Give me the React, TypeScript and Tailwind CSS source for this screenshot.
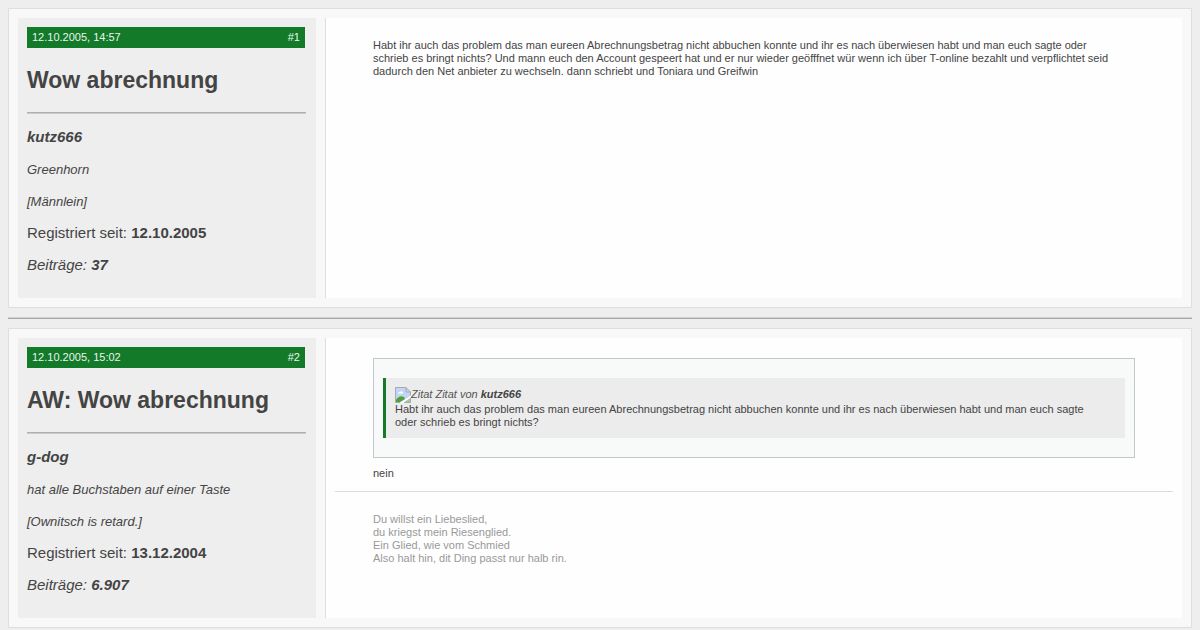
import type { ReactNode } from "react";

type PostProps = {
  date: string;
  number: string;
  title: string;
  author: string;
  rank: string;
  note: string;
  joined: string;
  posts: string;
  children: ReactNode;
};

function BrokenImage() {
  return (
    <svg role="img" aria-label="Zitat" width="16" height="16" viewBox="0 0 16 16" className="shrink-0">
      <path d="M.5 .5H11L15.5 5V9L5 15.5H.5Z" fill="#c3d5f5" />
      <path d="M1 15V13C3 9.5 6 8.5 9 10L10 12L5 15Z" fill="#4da338" />
      <path d="M3 6.5C3 5 4.5 4.5 5.2 5.2C6 3.6 8.2 4.3 8 6.5Z" fill="#fff" />
      <path d="M5 15.5H.5V.5H11L15.5 5V8.5M11 .5V5H15.5" fill="none" stroke="#a5abb0" />
      <path d="M15.5 11V15.5H9L15.5 11Z" fill="#9fc994" stroke="#a5abb0" />
      <path d="M16 8.5L5 16H8L16 10.5Z" fill="#fff" />
    </svg>
  );
}

function Post({ date, number, title, author, rank, note, joined, posts, children }: PostProps) {
  return (
    <article className="flex gap-[9px] border border-[#dedede] bg-[#f8f8f8] p-[9px]">
      <aside className="w-[298px] shrink-0 bg-[#eeeeee] px-[9px] pt-[9px] pb-6">
        <header className="mr-0.5 flex justify-between bg-[#137a2a] px-[5px] py-1 text-[11px] leading-[13px] text-[#e9f5eb]">
          <time>{date}</time>
          <span>{number}</span>
        </header>
        <h2 className="mt-[18px] text-[23px] leading-7 font-bold">{title}</h2>
        <hr className="mt-[18px] mr-px mb-3.5 border-t border-b border-t-[#b0b0b0] border-b-[#cacaca]" />
        <div className="flex flex-col gap-3.5 text-[15px] leading-[18px]">
          <p className="font-bold italic">{author}</p>
          <p className="-mb-0.5 text-[13px] leading-5 italic">{rank}</p>
          <p className="-mb-0.5 text-[13px] leading-5 italic">{note}</p>
          <p>
            Registriert seit: <strong>{joined}</strong>
          </p>
          <p className="italic">
            Beiträge: <strong>{posts}</strong>
          </p>
        </div>
      </aside>
      <section className="min-w-0 flex-1 border-l border-[#dedede] bg-[#fefefe] text-[11px] leading-[13px]">
        {children}
      </section>
    </article>
  );
}

export default function App() {
  return (
    <main className="bg-[#eeeeee] p-2 font-['Liberation_Sans',Arial,sans-serif] text-[#444444]">
      <Post
        date="12.10.2005, 14:57"
        number="#1"
        title="Wow abrechnung"
        author="kutz666"
        rank="Greenhorn"
        note="[Männlein]"
        joined="12.10.2005"
        posts="37"
      >
        <p className="pt-[21px] pr-16 pl-[47px]">
          Habt ihr auch das problem das man eureen Abrechnungsbetrag nicht abbuchen konnte und ihr es nach überwiesen
          habt und man euch sagte oder schrieb es bringt nichts? Und mann euch den Account gespeert hat und er nur
          wieder geöfffnet wür wenn ich über T-online bezahlt und verpflichtet seid dadurch den Net anbieter zu
          wechseln. dann schriebt und Toniara und Greifwin
        </p>
      </Post>
      <hr className="my-[9px] border-t border-b border-t-[#d2d2d2] border-b-[#a8a8a8]" />
      <Post
        date="12.10.2005, 15:02"
        number="#2"
        title="AW: Wow abrechnung"
        author="g-dog"
        rank="hat alle Buchstaben auf einer Taste"
        note="[Ownitsch is retard.]"
        joined="13.12.2004"
        posts="6.907"
      >
        <div className="px-[47px] pt-5">
          <div className="border border-[#c0c8cb] bg-[#f8f9f9] px-[9px] py-[19px]">
            <blockquote className="border-l-[3px] border-[#137a2a] bg-[#ececec] py-[9px] pr-6 pl-[9px]">
              <div className="flex h-4 items-start leading-[14px] text-[#555555] italic">
                <BrokenImage />
                <span>
                  Zitat Zitat von <strong className="text-[#444444]">kutz666</strong>
                </span>
              </div>
              <p>
                Habt ihr auch das problem das man eureen Abrechnungsbetrag nicht abbuchen konnte und ihr es nach
                überwiesen habt und man euch sagte oder schrieb es bringt nichts?
              </p>
            </blockquote>
          </div>
          <p className="mt-[9px]">nein</p>
        </div>
        <div className="mx-[9px] mt-[11px] border-t border-[#dcdcdc] px-[38px] pt-[21px] text-[#999999]">
          <p>Du willst ein Liebeslied,</p>
          <p>du kriegst mein Riesenglied.</p>
          <p>Ein Glied, wie vom Schmied</p>
          <p>Also halt hin, dit Ding passt nur halb rin.</p>
        </div>
      </Post>
    </main>
  );
}
